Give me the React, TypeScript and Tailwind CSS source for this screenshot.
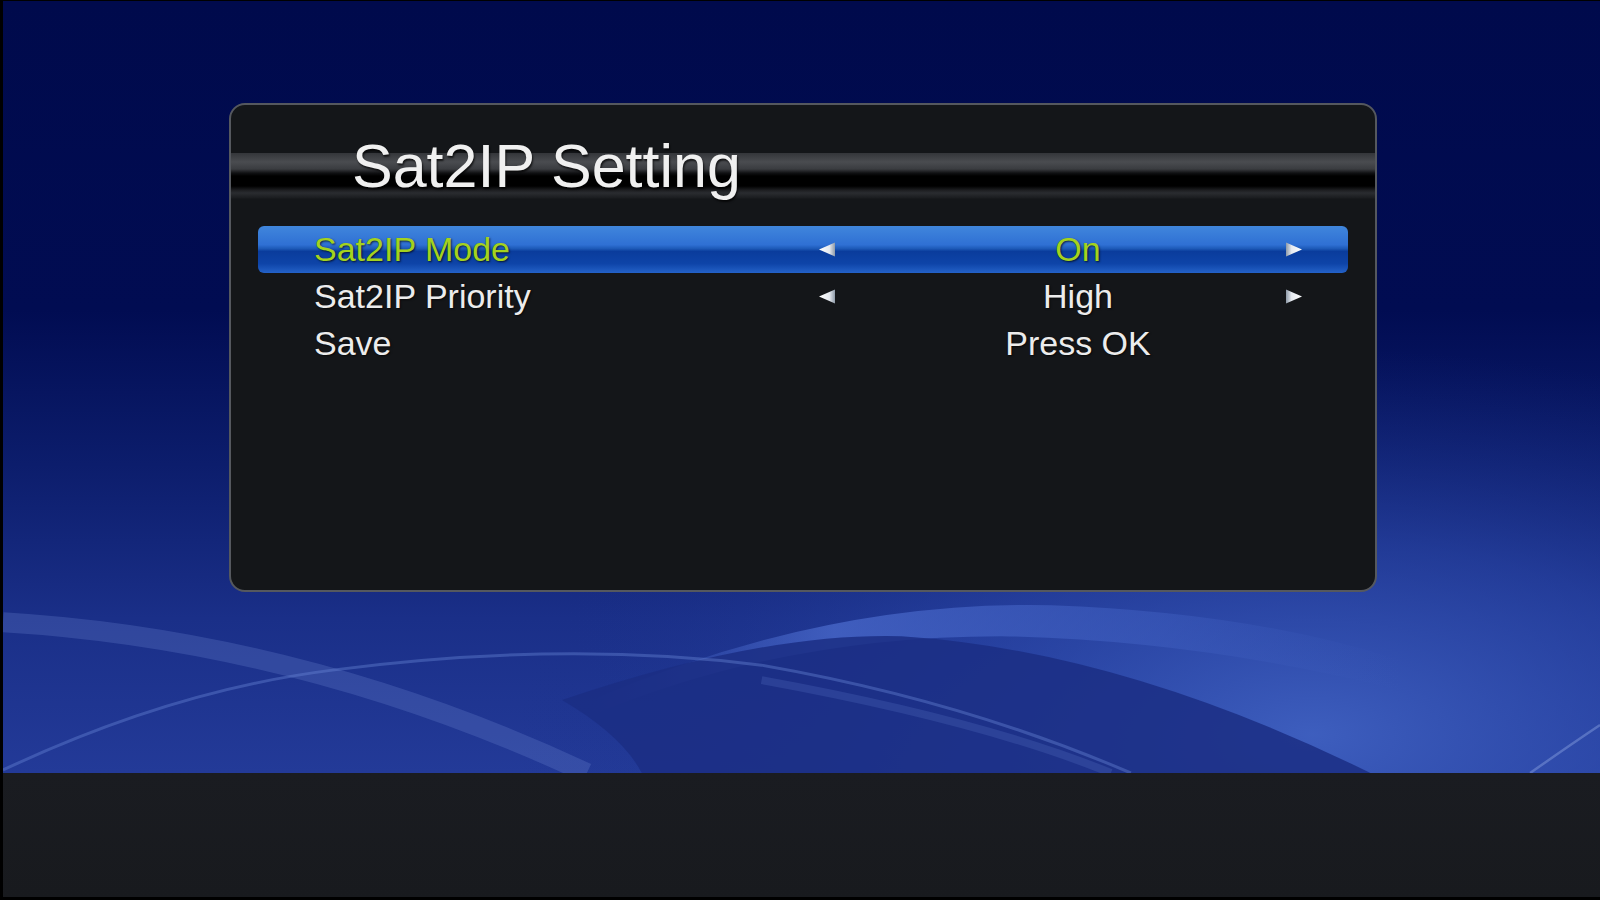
import React from 'react';

const rows = [
  { label: 'Sat2IP Mode', value: 'On', arrows: true },
  { label: 'Sat2IP Priority', value: 'High', arrows: true },
  { label: 'Save', value: 'Press OK', arrows: false },
];

function Arrow({ dir, hidden, className = '' }: { dir: 'left' | 'right'; hidden?: boolean; className?: string }) {
  const pts = dir === 'left' ? '1,7.5 17,0.5 17,14.5' : '1,0.5 17,7.5 1,14.5';
  return (
    <svg width="18" height="15" viewBox="0 0 18 15" className={`shrink-0 ${hidden ? 'invisible' : ''} ${className}`}>
      <defs>
        <linearGradient id={`ag-${dir}`} x1={dir === 'left' ? '0' : '1'} y1="0" x2={dir === 'left' ? '1' : '0'} y2="0">
          <stop offset="0" stopColor="#ffffff" />
          <stop offset="0.65" stopColor="#e6eaf0" />
          <stop offset="1" stopColor="#8e9aa8" />
        </linearGradient>
      </defs>
      <polygon points={pts} fill={`url(#ag-${dir})`} />
    </svg>
  );
}

function Backdrop() {
  return (
    <svg className="absolute inset-0 w-full h-full" viewBox="0 0 1600 773" preserveAspectRatio="none">
      <defs>
        <linearGradient id="sky" x1="0" y1="0" x2="0" y2="1">
          <stop offset="0" stopColor="#000a4c" />
          <stop offset="0.4" stopColor="#010c52" />
          <stop offset="0.6" stopColor="#0c1d6c" />
          <stop offset="0.8" stopColor="#1a2f88" />
          <stop offset="1" stopColor="#233a98" />
        </linearGradient>
        <radialGradient id="glow" cx="0.82" cy="0.95" r="0.5">
          <stop offset="0" stopColor="#3f60c0" stopOpacity="0.95" />
          <stop offset="0.5" stopColor="#2f4db0" stopOpacity="0.5" />
          <stop offset="1" stopColor="#1a2f88" stopOpacity="0" />
        </radialGradient>
        <linearGradient id="swoosh" x1="0" y1="0" x2="1" y2="0">
          <stop offset="0" stopColor="#4766c8" stopOpacity="0" />
          <stop offset="0.3" stopColor="#4a6acc" stopOpacity="0.75" />
          <stop offset="0.7" stopColor="#4262c4" stopOpacity="0.45" />
          <stop offset="1" stopColor="#3d5cbc" stopOpacity="0" />
        </linearGradient>
      </defs>
      <rect width="1600" height="773" fill="url(#sky)" />
      <rect width="1600" height="773" fill="url(#glow)" />
      {/* bright swoosh above the dark arc */}
      <path d="M590 700 Q820 600 1050 605 Q1250 612 1400 660 L1400 690 Q1200 640 1000 636 Q780 636 590 715 Z" fill="url(#swoosh)" />
      {/* dark arc */}
      <path d="M560 700 Q760 632 900 636 Q1120 650 1370 773 L640 773 Q620 735 560 700 Z" fill="#1b2e84" opacity="0.85" />
      {/* broad light band */}
      <path d="M0 622 Q300 640 585 773" stroke="#6a84d0" strokeOpacity="0.28" strokeWidth="20" fill="none" />
      {/* thin arc */}
      <path d="M0 770 Q170 690 330 670 Q560 640 760 665 Q960 700 1130 773" stroke="#6a86d6" strokeOpacity="0.4" strokeWidth="3" fill="none" />
      <path d="M760 680 Q980 720 1110 773" stroke="#6a86d6" strokeOpacity="0.2" strokeWidth="8" fill="none" />
      {/* right thin arc */}
      <path d="M1530 773 Q1570 745 1600 725" stroke="#8aa2e0" strokeOpacity="0.45" strokeWidth="2.5" fill="none" />
    </svg>
  );
}

export default function App() {
  return (
    <div className="w-full h-[900px] flex flex-col bg-black border-l-[3px] border-t border-black font-['Liberation_Sans',Arial,sans-serif]">
      <div className="relative h-[772px] shrink-0 overflow-hidden">
        <Backdrop />
        <div className="relative pt-[102px] pl-[226px]">
          <div className="w-[1148px] h-[489px] rounded-[16px] border-2 border-[#55585e] bg-[#141619] overflow-hidden">
            {/* Title stripe */}
            <div className="h-[121px] pt-[30px] pl-[121px] bg-[linear-gradient(to_bottom,transparent_0px,transparent_48px,#34363a_48px,#4a4c50_57px,#3a3c40_64px,#101113_68px,#000000_71px,#000000_81px,#1c1d20_85px,#2a2c30_88px,#1a1c1f_93px,transparent_94px)]">
              <h1 className="text-[61px] leading-[62px] text-[#f0f0f0] [text-shadow:1px_2px_2px_rgba(0,0,0,0.7)]">
                Sat2IP Setting
              </h1>
            </div>

            {/* Settings rows */}
            <div className="px-[27px] flex flex-col">
              {rows.map((r, i) => {
                const active = i === 0;
                return (
                  <div
                    key={r.label}
                    className={`h-[47px] flex items-center rounded-[6px] text-[34px] leading-[47px] [text-shadow:1px_1px_2px_rgba(0,0,0,0.7)] ${
                      active
                        ? 'bg-[linear-gradient(to_bottom,#4086dc_0%,#2f70d4_40%,#1d5ab8_48%,#0a3c9c_54%,#0e44a8_80%,#2462c8_100%)] text-[#a4d21e]'
                        : 'text-[#ececec]'
                    }`}
                  >
                    <span className="w-[560px] pl-[56px] shrink-0">{r.label}</span>
                    <Arrow dir="left" hidden={!r.arrows} />
                    <span className="w-[200px] ml-[142px] text-center shrink-0">{r.value}</span>
                    <Arrow dir="right" hidden={!r.arrows} className="ml-[107px]" />
                  </div>
                );
              })}
            </div>
          </div>
        </div>
      </div>
      <div className="flex-1 bg-[linear-gradient(to_bottom,#1a1c21,#181a1e)] border-b-[3px] border-black" />
    </div>
  );
}
